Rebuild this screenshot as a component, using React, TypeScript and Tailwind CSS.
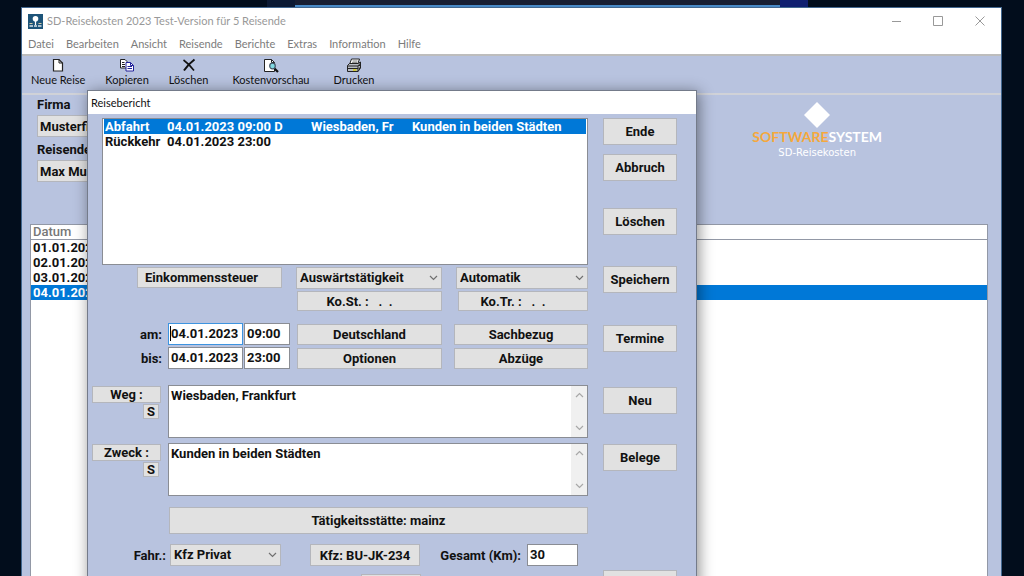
import { ReactNode, useState } from 'react';

const uiFont = "font-[Lato,'Noto_Sans',sans-serif]";
const systemFont = "font-[Roboto,'Liberation_Sans',sans-serif]";

const menuItems = ['Datei', 'Bearbeiten', 'Ansicht', 'Reisende', 'Berichte', 'Extras', 'Information', 'Hilfe'];

const trips = ['01.01.2023', '02.01.2023', '03.01.2023', '04.01.2023'];

const entries = [
  { type: 'Abfahrt', time: '04.01.2023 09:00 D', way: 'Wiesbaden, Fr', purpose: 'Kunden in beiden Städten' },
  { type: 'Rückkehr', time: '04.01.2023 23:00', way: '', purpose: '' },
];

function AppIcon() {
  return (
    <svg width="15" height="15" viewBox="0 0 15 15" aria-hidden="true">
      <rect width="15" height="15" fill="#1d5479" />
      <circle cx="7.5" cy="4.8" r="2.800" fill="#fff" />
      <path d="M7.500 7v4" stroke="#fff" strokeWidth="1.200" />
      <path d="M1.500 9.500h3M10.500 9.500h3" stroke="#d5c9a5" strokeWidth="1.200" />
      <path d="M1.500 12h3.500M6 12h3M10 12h3.500" stroke="#d9e4ea" strokeWidth="1.500" />
    </svg>
  );
}

function NewIcon() {
  return (
    <svg width="16" height="14" viewBox="0 0 16 14" aria-hidden="true">
      <path d="M3.500 1.500h5.500l3.500 3.500v8h-9z" fill="#fff" stroke="#222" strokeWidth="1.200" />
      <path d="M9 1.500v3.500h3.500" fill="none" stroke="#222" />
    </svg>
  );
}

function CopyIcon() {
  return (
    <svg width="16" height="14" viewBox="0 0 16 14" aria-hidden="true">
      <path d="M1.500 1.500h4.500l2 2v6.500h-6.500z" fill="#fff" stroke="#222" />
      <path d="M3 4.500h2.500M3 6.500h3M3 8.500h3" stroke="#222" />
      <path d="M7 4.500h4.500l3 3v5.500h-7.500z" fill="#fff" stroke="#22229a" />
      <path d="M11.500 4.500v3h3M8.500 8.500h4.500M8.500 10.500h4.500" fill="none" stroke="#22229a" />
    </svg>
  );
}

function DeleteIcon() {
  return (
    <svg width="16" height="14" viewBox="0 0 16 14" aria-hidden="true">
      <path d="M2.500 2C6 4.500 10 8.500 13 12.500" fill="none" stroke="#111" strokeWidth="1.600" />
      <path d="M13.500 1.500C9.500 4.500 5.500 8.500 3 12.500" fill="none" stroke="#111" strokeWidth="2" />
    </svg>
  );
}

function PreviewIcon() {
  return (
    <svg width="16" height="15" viewBox="0 0 16 15" aria-hidden="true">
      <path d="M1.500 1.500h7l3 3v9h-10z" fill="#fff" stroke="#222" />
      <path d="M8.500 1.500v3h3" fill="none" stroke="#222" />
      <path d="M11.500 10.500l3.500 3.500" stroke="#111" strokeWidth="2.200" />
      <circle cx="9.500" cy="8" r="2.800" fill="#7fd9e2" stroke="#456" strokeWidth="1.200" />
    </svg>
  );
}

function PrintIcon() {
  return (
    <svg width="16" height="15" viewBox="0 0 16 15" aria-hidden="true">
      <path d="M5.500 1h8l-2 5.500h-8z" fill="#fff" stroke="#222" />
      <path d="M6.500 3h5M6 4.700h5" stroke="#555" strokeWidth=".8" />
      <path d="M1.500 7.500l2-2h8.500l2.500-1.500v6l-2.500 3.500h-10.500z" fill="#b9bcc4" stroke="#222" />
      <path d="M1.500 8h10.500v5.500M12 8l2.500-3M1.500 10.500h10.500M13 8l1.500-1.500M13 11l1.500-2" fill="none" stroke="#222" />
      <path d="M7 12h3.500" stroke="#d8cf1c" strokeWidth="1.600" />
    </svg>
  );
}

const tools = [
  { label: 'Neue Reise', icon: <NewIcon />, space: 'mr-5' },
  { label: 'Kopieren', icon: <CopyIcon />, space: 'mr-5' },
  { label: 'Löschen', icon: <DeleteIcon />, space: 'mr-6' },
  { label: 'Kostenvorschau', icon: <PreviewIcon />, space: 'mr-6' },
  { label: 'Drucken', icon: <PrintIcon />, space: '' },
];

function Chevron({ up = false, className = '' }: { up?: boolean; className?: string }) {
  return (
    <svg width="9" height="6" viewBox="0 0 9 6" className={className} aria-hidden="true">
      <path d={up ? 'M1 5l3.500-3.500L8 5' : 'M1 1l3.500 3.500L8 1'} fill="none" stroke="currentColor" strokeWidth="1.200" />
    </svg>
  );
}

function GreyButton({ children, className = '' }: { children: ReactNode; className?: string }) {
  return (
    <button
      type="button"
      className={`flex items-center border border-[#b4b6bc] bg-[#e1e1e1] font-bold whitespace-pre ${className}`}
    >
      {children}
    </button>
  );
}

function GreySelect({ label, options, id, className = '' }: { label?: string; options: string[]; id: string; className?: string }) {
  return (
    <div className={`relative ${className}`}>
      <select
        id={id}
        aria-label={label}
        className="block h-[22px] w-full appearance-none border border-[#b4b6bc] bg-[#e1e1e1] pb-px pl-[3px] font-bold outline-none"
      >
        {options.map((option) => (
          <option key={option}>{option}</option>
        ))}
      </select>
      <Chevron className="pointer-events-none absolute top-2 right-1 text-[#707070]" />
    </div>
  );
}

function TimeRow({ label, id, date, time, focused, children }: {
  label: string;
  id: string;
  date: string;
  time: string;
  focused?: boolean;
  children: ReactNode;
}) {
  return (
    <div className="flex items-center">
      <label htmlFor={id} className="w-[76px] pr-[6px] text-right">{label}</label>
      <div className="relative mr-px">
        <input
          id={id}
          defaultValue={date}
          className={`block h-[22px] w-[75px] border bg-white px-[2px] pb-px outline-none ${focused ? 'border-[#3d94e0]' : 'border-[#8a8d94]'}`}
        />
        {focused && <span className="absolute top-[3px] left-[2px] h-[15px] w-px bg-black" />}
      </div>
      <input
        aria-label={`${label} Uhrzeit`}
        defaultValue={time}
        className="h-[22px] w-[46px] border border-[#8a8d94] bg-white px-[2px] pb-px outline-none"
      />
      {children}
    </div>
  );
}

function MemoRow({ label, id, value }: { label: string; id: string; value: string }) {
  return (
    <div className="flex items-start">
      <div className="flex w-[76px] flex-col pt-px">
        <GreyButton className="h-[17px] w-[69px] justify-center">{label}</GreyButton>
        <GreyButton className="mt-px ml-[51px] h-[15px] w-4 justify-center">S</GreyButton>
      </div>
      <div className="flex h-[53px] flex-1 border border-[#8a8d94] bg-white">
        <textarea
          id={id}
          aria-label={label}
          defaultValue={value}
          className="flex-1 resize-none overflow-hidden px-[2px] pt-[2px] leading-[15px] outline-none"
        />
        <div className="flex w-4 flex-col items-center justify-between bg-[#f0f0f0] py-[6px] text-[#a8a8a8]">
          <Chevron up />
          <Chevron />
        </div>
      </div>
    </div>
  );
}

function ReportDialog() {
  const [selected, setSelected] = useState(0);

  return (
    <div
      role="dialog"
      aria-label="Reisebericht"
      className="absolute top-[90px] left-[87px] h-[520px] w-[610px] border border-[#747b8a] bg-[#b8c3df] text-[13px] leading-[15px] font-bold shadow-[2px_2px_14px_rgba(0,0,0,0.45)]"
    >
      <div className={`${uiFont} flex h-[23px] items-center bg-white pl-[3px] text-[11px] font-normal`}>Reisebericht</div>

      <div className="flex items-start pt-1 pl-1">
        <div className="w-[496px]">
          <ul role="listbox" aria-label="Reisen" className="ml-[10px] h-[147px] border border-[#8a8d94] bg-white px-px">
            {entries.map((entry, index) => (
              <li
                key={entry.type}
                role="option"
                aria-selected={selected === index}
                onClick={() => setSelected(index)}
                className={`grid h-[15px] cursor-default grid-cols-[62px_144px_101px_1fr] pl-px whitespace-nowrap ${
                  selected === index ? 'bg-[#0078d7] text-white' : ''
                }`}
              >
                <span>{entry.type}</span>
                <span>{entry.time}</span>
                <span>{entry.way}</span>
                <span>{entry.purpose}</span>
              </li>
            ))}
          </ul>

          <div className="mt-[2px] ml-[45px] flex gap-[14px]">
            <GreyButton className="h-[21px] w-[145px] justify-center pr-4">Einkommenssteuer</GreyButton>
            <GreySelect id="activity" label="Tätigkeit" options={['Auswärtstätigkeit']} className="w-[146px]" />
            <GreySelect id="mode" label="Berechnung" options={['Automatik']} className="w-[132px]" />
          </div>
          <div className="mt-[2px] flex justify-end gap-4">
            <GreyButton className="h-5 w-[145px] justify-center pr-5">{'Ko.St. :   .  .'}</GreyButton>
            <GreyButton className="h-5 w-[130px] justify-center pr-5">{'Ko.Tr. :   .  .'}</GreyButton>
          </div>

          <div className="mt-3 flex flex-col gap-[2px]">
            <TimeRow label="am:" id="from" date="04.01.2023" time="09:00" focused>
              <GreyButton className="ml-[7px] h-[21px] w-[145px] justify-center">Deutschland</GreyButton>
              <GreyButton className="ml-3 h-[21px] w-[134px] justify-center">Sachbezug</GreyButton>
            </TimeRow>
            <TimeRow label="bis:" id="to" date="04.01.2023" time="23:00">
              <GreyButton className="ml-[7px] h-[21px] w-[145px] justify-center">Optionen</GreyButton>
              <GreyButton className="ml-3 h-[21px] w-[134px] justify-center">Abzüge</GreyButton>
            </TimeRow>
          </div>

          <div className="mt-4 flex flex-col gap-[5px]">
            <MemoRow label="Weg :" id="way" value="Wiesbaden, Frankfurt" />
            <MemoRow label="Zweck :" id="purpose" value="Kunden in beiden Städten" />
          </div>

          <GreyButton className="mt-[11px] ml-[77px] h-[27px] w-[419px] justify-center">Tätigkeitsstätte: mainz</GreyButton>

          <div className="mt-[10px] flex items-center">
            <label htmlFor="vehicle" className="w-[78px] pr-1 text-right">Fahr.:</label>
            <GreySelect id="vehicle" options={['Kfz Privat']} className="w-[111px]" />
            <GreyButton className="ml-[29px] h-[22px] w-[110px] justify-center">Kfz: BU-JK-234</GreyButton>
            <label htmlFor="km" className="w-[107px] pr-[6px] text-right">Gesamt (Km):</label>
            <input id="km" defaultValue="30" className="h-[22px] w-[51px] border border-[#8a8d94] bg-white px-[2px] pb-px outline-none" />
          </div>
          <GreyButton className="mt-2 ml-[269px] h-[22px] w-[60px]">{' '}</GreyButton>
        </div>

        <div className="ml-[15px] flex w-[74px] flex-col">
          <GreyButton className="h-[27px] justify-center">Ende</GreyButton>
          <GreyButton className="mt-[9px] h-[27px] justify-center">Abbruch</GreyButton>
          <GreyButton className="mt-[27px] h-[27px] justify-center">Löschen</GreyButton>
          <GreyButton className="mt-[31px] h-[27px] justify-center">Speichern</GreyButton>
          <GreyButton className="mt-8 h-[27px] justify-center">Termine</GreyButton>
          <GreyButton className="mt-[35px] h-[27px] justify-center">Neu</GreyButton>
          <GreyButton className="mt-[30px] h-[27px] justify-center">Belege</GreyButton>
          <GreyButton className="mt-[99px] h-[27px]">{' '}</GreyButton>
        </div>
      </div>
    </div>
  );
}

export default function App() {
  return (
    <div className={`${systemFont} relative flex h-screen flex-col overflow-hidden bg-[#020d1c] text-[#111]`}>
      {/* Strip of the desktop above the window */}
      <div className="flex h-[7px] shrink-0">
        <div className="w-[267px]" />
        <div className="w-7 bg-[#0b1933]" />
        <div className="flex-1 border-b-2 border-[#4788c4] bg-[#161d31]" />
        <div className="w-7 bg-[#101f70]" />
        <div className="w-[216px]" />
      </div>

      <div className="mr-[22px] ml-[21px] flex flex-1 flex-col border-t border-r border-l border-[#42678f] bg-[#b8c3df]">
        <div className="bg-white">
          <div className={`${uiFont} flex h-[26px] items-center pl-[6px] text-[11px] text-[#999]`}>
            <AppIcon />
            <span className="ml-1">SD-Reisekosten 2023 Test-Version für 5 Reisende</span>
            <div className="ml-auto flex items-center gap-8 pr-4 text-[#999]">
              <button type="button" aria-label="Minimieren">
                <svg width="10" height="10" viewBox="0 0 10 10"><path d="M1 5.500h9" stroke="currentColor" /></svg>
              </button>
              <button type="button" aria-label="Maximieren">
                <svg width="10" height="10" viewBox="0 0 10 10"><path d="M.5.500h9v9h-9z" fill="none" stroke="currentColor" /></svg>
              </button>
              <button type="button" aria-label="Schließen">
                <svg width="10" height="10" viewBox="0 0 10 10"><path d="M.5.500l9 9M9.500.500l-9 9" stroke="currentColor" /></svg>
              </button>
            </div>
          </div>
          <nav className={`${uiFont} flex h-5 items-center gap-3 pl-[6px] text-[11px] text-[#7c7c7c]`}>
            {menuItems.map((item) => (
              <a key={item} href="#">{item}</a>
            ))}
          </nav>
        </div>

        <div className={`${uiFont} flex h-[41px] items-start border-t-2 border-b-2 border-t-[#bdbdbd] border-b-[#d0d2d8] pt-px pl-[9px] text-[11px] leading-[14px]`}>
          {tools.map((tool) => (
            <button key={tool.label} type="button" className={`flex flex-col items-center ${tool.space}`}>
              <span className="flex h-4 items-center">{tool.icon}</span>
              {tool.label}
            </button>
          ))}
        </div>

        <div className="flex flex-1 flex-col px-2 pt-[2px] text-[13px] leading-[15px] font-bold">
          <div className="flex h-[127px] justify-between pl-[7px]">
            <div className="w-[240px]">
              <div>Firma</div>
              <GreyButton className="mt-[3px] h-[22px] w-full pl-[2px]">Musterfi</GreyButton>
              <div className="mt-[5px]">Reisender</div>
              <GreyButton className="mt-[3px] h-[22px] w-full pl-[2px]">Max Muster</GreyButton>
            </div>
            <div className="mr-[111px] flex flex-col items-center pt-[5px] text-white">
              <svg width="26" height="26" viewBox="0 0 26 26" aria-hidden="true">
                <path d="M13 0l13 13-13 13L0 13z" fill="#fff" />
              </svg>
              <div className="font-[Lato,sans-serif] text-[14px] leading-[18px]">
                <span className="text-[#f5a83c]">SOFTWARE</span>SYSTEM
              </div>
              <div className="font-['DejaVu_Sans',sans-serif] text-[10px] leading-[13px] font-normal">SD-Reisekosten</div>
            </div>
          </div>

          <div className="mr-[5px] flex-1 border border-b-0 border-[#9298a6] bg-white">
            <table className="w-full border-collapse text-left">
              <thead className="leading-[14px]">
                <tr className="border-b border-[#9298a6] text-[#777]">
                  <th className="pl-[2px] font-medium">Datum</th>
                </tr>
              </thead>
              <tbody>
                {trips.map((trip) => (
                  <tr key={trip} className={trip === '04.01.2023' ? 'bg-[#0078d7] text-white' : ''}>
                    <td className="pl-[2px]">{trip}</td>
                  </tr>
                ))}
              </tbody>
            </table>
          </div>
        </div>
      </div>

      <ReportDialog />
    </div>
  );
}
